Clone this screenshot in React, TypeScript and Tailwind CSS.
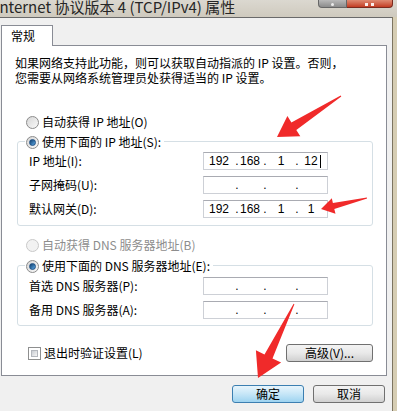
import React from 'react'

function arrowPoints(x1: number, y1: number, x2: number, y2: number, headLen: number, headW: number, shaftW: number) {
  const dx = x2 - x1
  const dy = y2 - y1
  const len = Math.hypot(dx, dy)
  const ux = dx / len
  const uy = dy / len
  const nx = -uy
  const ny = ux
  const bx = x2 - ux * headLen
  const by = y2 - uy * headLen
  const pts = [
    [x1 + nx * 0.5, y1 + ny * 0.5],
    [bx + (nx * shaftW) / 2, by + (ny * shaftW) / 2],
    [bx + (nx * headW) / 2, by + (ny * headW) / 2],
    [x2, y2],
    [bx - (nx * headW) / 2, by - (ny * headW) / 2],
    [bx - (nx * shaftW) / 2, by - (ny * shaftW) / 2],
    [x1 - nx * 0.5, y1 - ny * 0.5],
  ]
  return pts.map(p => `${p[0].toFixed(1)},${p[1].toFixed(1)}`).join(' ')
}

function Radio({ checked, disabled }: { checked?: boolean; disabled?: boolean }) {
  return (
    <span
      className={`flex h-[13px] w-[13px] shrink-0 items-center justify-center rounded-full border ${
        disabled ? 'border-[#c9c9c9] bg-[#f2f2f2]' : 'border-[#8b8b8b] bg-linear-to-br from-[#d6d6d6] to-[#fafafa]'
      }`}
    >
      {checked && <span className="h-[7px] w-[7px] rounded-full border border-[#1d4f84] bg-linear-to-br from-[#0f3e6e] to-[#5daae6]" />}
    </span>
  )
}

function Checkbox() {
  return (
    <span className="flex h-[13px] w-[13px] shrink-0 border border-[#8e8f8f] bg-white p-[2px]">
      <span className="block h-full w-full border border-[#b3b7bd] bg-linear-to-br from-[#c9cdd3] to-[#f5f5f5]" />
    </span>
  )
}

function IpBox({ parts, cursor }: { parts?: string[]; cursor?: boolean }) {
  const p = parts ?? ['', '', '', '']
  return (
    <div className="flex h-[18px] w-[125px] items-center border border-[#cdd0d6] border-t-[#a9abb2] bg-white text-[12px] leading-none font-['Liberation_Sans',sans-serif]">
      <span className="w-[30px] text-center">{p[0]}</span>
      <span className="w-[6px] text-center">.</span>
      <span className="w-[20px] text-center">{p[1]}</span>
      <span className="w-[10px] text-center">.</span>
      <span className="w-[22px] text-center">{p[2]}</span>
      <span className="w-[10px] text-center">.</span>
      <span className="w-[18px] text-center">{p[3]}</span>
      {cursor && <span className="h-[13px] w-px bg-black" />}
    </div>
  )
}

function Row({ label, children }: { label: string; children: React.ReactNode }) {
  return (
    <div className="flex h-[18px] items-center pl-[11px]">
      <span className="w-[174px]">{label}</span>
      {children}
    </div>
  )
}

function WinButton({ label, primary, className }: { label: string; primary?: boolean; className?: string }) {
  return (
    <div
      className={`flex h-[18px] items-center justify-center rounded-[3px] border ${
        primary
          ? 'border-[#3c7fb1] bg-linear-to-b from-[#e8f5fc] via-[#c6e6f7] to-[#9dd3f0]'
          : 'border-[#707070] bg-linear-to-b from-[#f3f3f3] via-[#e9e9e9] to-[#d0d0d0]'
      } ${className ?? ''}`}
    >
      {label}
    </div>
  )
}

export default function App() {
  return (
    <div className="relative h-[411px] w-[397px] overflow-hidden bg-[#f0f0f0] text-[12px] leading-none text-black font-['Noto_Sans_CJK_SC',sans-serif]">
      {/* title bar */}
      <div className="flex h-[17px] items-start justify-between overflow-hidden bg-linear-to-b from-[#dbd8d0] to-[#cfcabe]">
        <span className="-ml-[5px] -mt-[2px] whitespace-nowrap text-[15px] leading-[17px] text-[#262626]">
          Internet 协议版本 4 (TCP/IPv4) 属性
        </span>
        <div className="mr-[4px] flex">
          <div className="flex h-[8px] w-[29px] items-end justify-center rounded-bl-[4px] border border-t-0 border-[#666] bg-linear-to-b from-[#b9b9b9] to-[#8c8c8c]">
            <span className="mb-[1px] h-[3px] w-[3px] rounded-full bg-white/80" />
          </div>
          <div className="flex h-[8px] w-[46px] items-end justify-center rounded-br-[4px] border border-l-0 border-t-0 border-[#7a2a1e] bg-linear-to-b from-[#de8a72] to-[#c23b22]">
            <span className="mb-[1px] h-[3px] w-[9px] border-x-[3px] border-white/90" />
          </div>
        </div>
      </div>

      <div className="flex h-[394px]">
        <div className="flex w-[392px] flex-col border-t border-[#6a6a6a] pl-[1px] pt-[7px]">
          {/* tab */}
          <div className="relative z-10 -mb-px flex h-[21px] w-[52px] items-center border border-b-0 border-[#898c95] bg-white pl-[9px]">
            常规
          </div>

          {/* tab panel */}
          <div className="flex h-[331px] w-[386px] flex-col border border-[#898c95] bg-white">
            <div className="pl-[13px] pt-[9px] leading-[15px]">
              <p>如果网络支持此功能，则可以获取自动指派的 IP 设置。否则，</p>
              <p>您需要从网络系统管理员处获得适当的 IP 设置。</p>
            </div>

            <div className="mt-[29px] flex h-[16px] items-center gap-[3px] pl-[24px]">
              <Radio />
              <span>自动获得 IP 地址(O)</span>
            </div>

            <div className="ml-[15px] mt-[11px] flex w-[356px] flex-col rounded-[3px] border border-[#d5dfe5] pb-[7px]">
              <div className="-mt-[8px] ml-[7px] flex h-[16px] w-fit items-center gap-[3px] bg-white pl-px pr-[3px]">
                <Radio checked />
                <span>使用下面的 IP 地址(S):</span>
              </div>
              <div className="mt-[2px] flex flex-col gap-[6px]">
                <Row label="IP 地址(I):">
                  <IpBox parts={['192', '168', '1', '12']} cursor />
                </Row>
                <Row label="子网掩码(U):">
                  <IpBox />
                </Row>
                <Row label="默认网关(D):">
                  <IpBox parts={['192', '168', '1', '1']} />
                </Row>
              </div>
            </div>

            <div className="mt-[11px] flex h-[16px] items-center gap-[3px] pl-[24px] text-[#8d8d8d]">
              <Radio disabled />
              <span>自动获得 DNS 服务器地址(B)</span>
            </div>

            <div className="ml-[15px] mt-[12px] flex w-[356px] flex-col rounded-[3px] border border-[#d5dfe5] pb-[6px]">
              <div className="-mt-[8px] ml-[7px] flex h-[16px] w-fit items-center gap-[3px] bg-white pl-px pr-[3px]">
                <Radio checked />
                <span>使用下面的 DNS 服务器地址(E):</span>
              </div>
              <div className="mt-[3px] flex flex-col gap-[6px]">
                <Row label="首选 DNS 服务器(P):">
                  <IpBox />
                </Row>
                <Row label="备用 DNS 服务器(A):">
                  <IpBox />
                </Row>
              </div>
            </div>

            <div className="mt-[18px] flex h-[18px] items-center justify-between pl-[26px] pr-[13px]">
              <div className="flex items-center gap-[3px]">
                <Checkbox />
                <span>退出时验证设置(L)</span>
              </div>
              <WinButton label="高级(V)..." className="w-[87px]" />
            </div>
          </div>

          {/* dialog buttons */}
          <div className="mt-[9px] flex justify-end gap-[9px] pr-[7px]">
            <WinButton label="确定" primary className="w-[72px]" />
            <WinButton label="取消" className="w-[72px]" />
          </div>
        </div>

        {/* window frame */}
        <div className="w-[5px] border-l border-[#7d7561] bg-[#d6cdb3]" />
      </div>

      {/* red annotation arrows */}
      <svg className="pointer-events-none absolute inset-0" width="397" height="411" viewBox="0 0 397 411">
        <polygon points={arrowPoints(341, 96, 277, 137, 20, 24, 9)} fill="#f02a2a" />
        <polygon points={arrowPoints(367, 198, 321, 209, 13, 16, 6)} fill="#f02a2a" />
        <polygon points={arrowPoints(294, 304, 258, 378, 24, 28, 9)} fill="#f02a2a" />
      </svg>
    </div>
  )
}
